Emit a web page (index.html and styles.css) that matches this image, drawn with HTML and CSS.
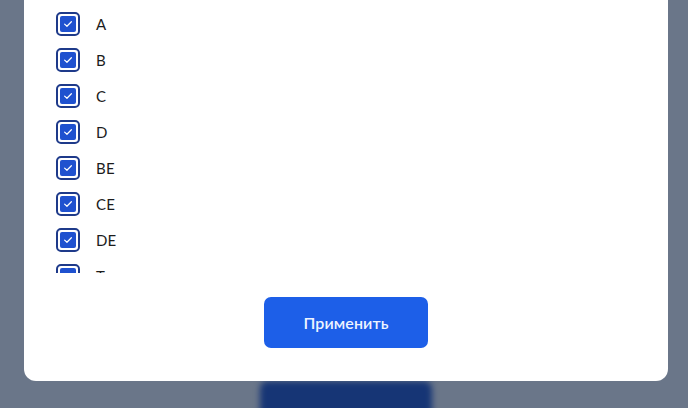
FILE: index.html
```html
<!DOCTYPE html>
<html lang="ru">
<head>
<meta charset="utf-8">
<link rel="stylesheet" href="styles.css">
</head>
<body>
<div class="page">
  <div class="modal">
    <div class="list">
      <label class="row"><span class="box"><span class="fill"><svg viewBox="0 0 16 16" width="12" height="12"><path d="M3.5 8.2 6.6 11 12.5 5" fill="none" stroke="#fff" stroke-width="1.6" stroke-linecap="round" stroke-linejoin="round"/></svg></span></span><span class="text">A</span></label>
      <label class="row"><span class="box"><span class="fill"><svg viewBox="0 0 16 16" width="12" height="12"><path d="M3.5 8.2 6.6 11 12.5 5" fill="none" stroke="#fff" stroke-width="1.6" stroke-linecap="round" stroke-linejoin="round"/></svg></span></span><span class="text">B</span></label>
      <label class="row"><span class="box"><span class="fill"><svg viewBox="0 0 16 16" width="12" height="12"><path d="M3.5 8.2 6.6 11 12.5 5" fill="none" stroke="#fff" stroke-width="1.6" stroke-linecap="round" stroke-linejoin="round"/></svg></span></span><span class="text">C</span></label>
      <label class="row"><span class="box"><span class="fill"><svg viewBox="0 0 16 16" width="12" height="12"><path d="M3.5 8.2 6.6 11 12.5 5" fill="none" stroke="#fff" stroke-width="1.6" stroke-linecap="round" stroke-linejoin="round"/></svg></span></span><span class="text">D</span></label>
      <label class="row"><span class="box"><span class="fill"><svg viewBox="0 0 16 16" width="12" height="12"><path d="M3.5 8.2 6.6 11 12.5 5" fill="none" stroke="#fff" stroke-width="1.6" stroke-linecap="round" stroke-linejoin="round"/></svg></span></span><span class="text">BE</span></label>
      <label class="row"><span class="box"><span class="fill"><svg viewBox="0 0 16 16" width="12" height="12"><path d="M3.5 8.2 6.6 11 12.5 5" fill="none" stroke="#fff" stroke-width="1.6" stroke-linecap="round" stroke-linejoin="round"/></svg></span></span><span class="text">CE</span></label>
      <label class="row"><span class="box"><span class="fill"><svg viewBox="0 0 16 16" width="12" height="12"><path d="M3.5 8.2 6.6 11 12.5 5" fill="none" stroke="#fff" stroke-width="1.6" stroke-linecap="round" stroke-linejoin="round"/></svg></span></span><span class="text">DE</span></label>
      <label class="row"><span class="box"><span class="fill"><svg viewBox="0 0 16 16" width="12" height="12"><path d="M3.5 8.2 6.6 11 12.5 5" fill="none" stroke="#fff" stroke-width="1.6" stroke-linecap="round" stroke-linejoin="round"/></svg></span></span><span class="text">T</span></label>
    </div>
    <div class="actions">
      <button class="apply">Применить</button>
    </div>
  </div>
  <div class="under">
    <div class="under-btn"></div>
  </div>
</div>
</body>
</html>
```

FILE: styles.css
```css
html, body {
  margin: 0;
  padding: 0;
  height: 100%;
  overflow: hidden;
}
body {
  background: #6a7689;
  font-family: "Lato", "Noto Sans", sans-serif;
}
.page {
  display: flex;
  flex-direction: column;
  height: 408px;
  overflow: hidden;
}
.modal {
  margin: 0 20px 0 24px;
  height: 381px;
  flex: none;
  background: #fff;
  border-radius: 0 0 12px 12px;
  display: flex;
  flex-direction: column;
  position: relative;
  z-index: 1;
}
.list {
  height: 267px;
  margin-top: 6px;
  overflow: hidden;
  padding-left: 32px;
}
.row {
  display: flex;
  align-items: center;
  height: 36px;
  gap: 16px;
}
.box {
  width: 24px;
  height: 24px;
  box-sizing: border-box;
  border: 2px solid #1e3a8a;
  border-radius: 5px;
  padding: 2px;
  display: flex;
}
.fill {
  flex: 1;
  background: #1f51cf;
  border-radius: 2px;
  display: flex;
  align-items: center;
  justify-content: center;
}
.text {
  font-size: 15px;
  color: #1c1c1c;
  letter-spacing: 0.2px;
}
.actions {
  display: flex;
  justify-content: center;
  margin-top: 24px;
}
.apply {
  width: 164px;
  height: 51px;
  border: none;
  border-radius: 7px;
  background: #1d5fe8;
  color: #eef4ff;
  font-family: "Lato", "Noto Sans", sans-serif;
  font-size: 16px;
  font-weight: 600;
  letter-spacing: 0.1px;
}
.under {
  display: flex;
  justify-content: center;
  padding-left: 4px;
  height: 27px;
}
.under-btn {
  width: 172px;
  height: 50px;
  flex: none;
  background: #163575;
  border-radius: 8px;
  filter: blur(3px);
}
```
